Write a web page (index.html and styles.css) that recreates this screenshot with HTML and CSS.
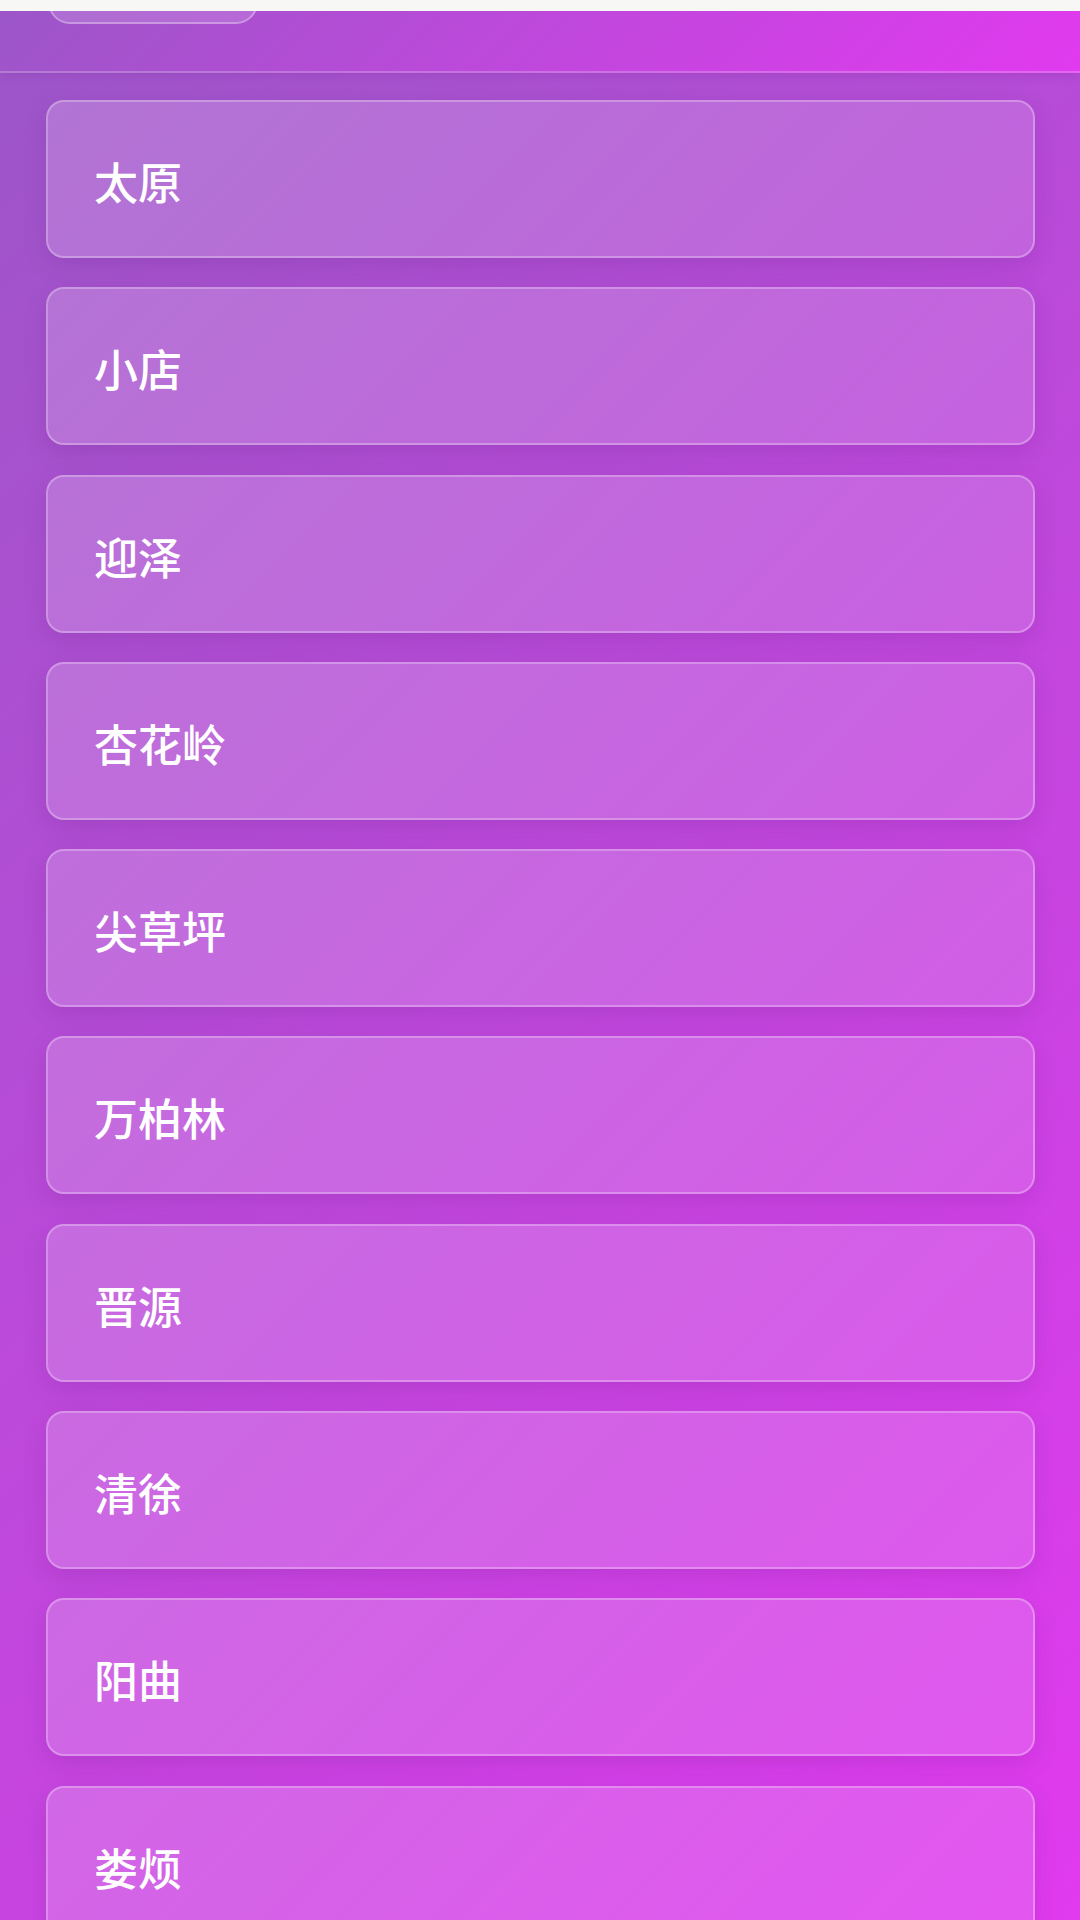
FILE: index.html
```html
<!DOCTYPE html>
<html lang="zh-CN">
<head>
  <meta charset="UTF-8" />
  <meta name="viewport" content="width=device-width, initial-scale=1.0"/>
  <title>站点列表</title>
  <link rel="stylesheet" href="styles.css">
</head>
<body>
  <div class="app">
    <div class="topbar">
      <button class="back-btn" aria-label="返回"></button>
    </div>
    <div class="stations">
      <div class="station">太原</div>
      <div class="station">小店</div>
      <div class="station">迎泽</div>
      <div class="station">杏花岭</div>
      <div class="station">尖草坪</div>
      <div class="station">万柏林</div>
      <div class="station">晋源</div>
      <div class="station">清徐</div>
      <div class="station">阳曲</div>
      <div class="station">娄烦</div>
    </div>
  </div>
</body>
</html>
```

FILE: styles.css
```css
html, body {
  height: 100%;
}
body {
  margin: 0;
  background: #f7f7f5;
  font-family: "Noto Sans CJK SC", "Noto Sans", sans-serif;
  overflow: hidden;
}
.app {
  margin-top: 11px;
  height: calc(100% - 11px);
  overflow: hidden;
  background: linear-gradient(135deg, #9c56c8 0%, #e13aef 100%);
}
.topbar {
  height: 60px;
  padding: 0 48px;
  overflow: hidden;
  background: linear-gradient(135deg, #9c56c8 0%, #e13aef 100%);
  border-bottom: 2px solid rgba(255, 255, 255, 0.22);
  box-shadow: 0 2px 10px rgba(70, 0, 100, 0.12);
}
.back-btn {
  display: block;
  width: 210px;
  height: 54px;
  margin-top: -41px;
  border: 2px solid rgba(255, 255, 255, 0.3);
  border-radius: 22px;
  background: rgba(255, 255, 255, 0.15);
}
.stations {
  display: flex;
  flex-direction: column;
  gap: 29.3px;
  padding: 27px 45px 0 46px;
}
.station {
  box-sizing: border-box;
  height: 158px;
  flex-shrink: 0;
  display: flex;
  align-items: center;
  padding: 4px 0 0 46px;
  border: 2px solid rgba(255, 255, 255, 0.28);
  border-radius: 18px;
  background: linear-gradient(135deg, rgba(255, 255, 255, 0.19), rgba(255, 255, 255, 0.14));
  box-shadow: 0 8px 24px rgba(60, 0, 90, 0.13);
  color: #fff;
  font-size: 44px;
  font-weight: 500;
}
```
